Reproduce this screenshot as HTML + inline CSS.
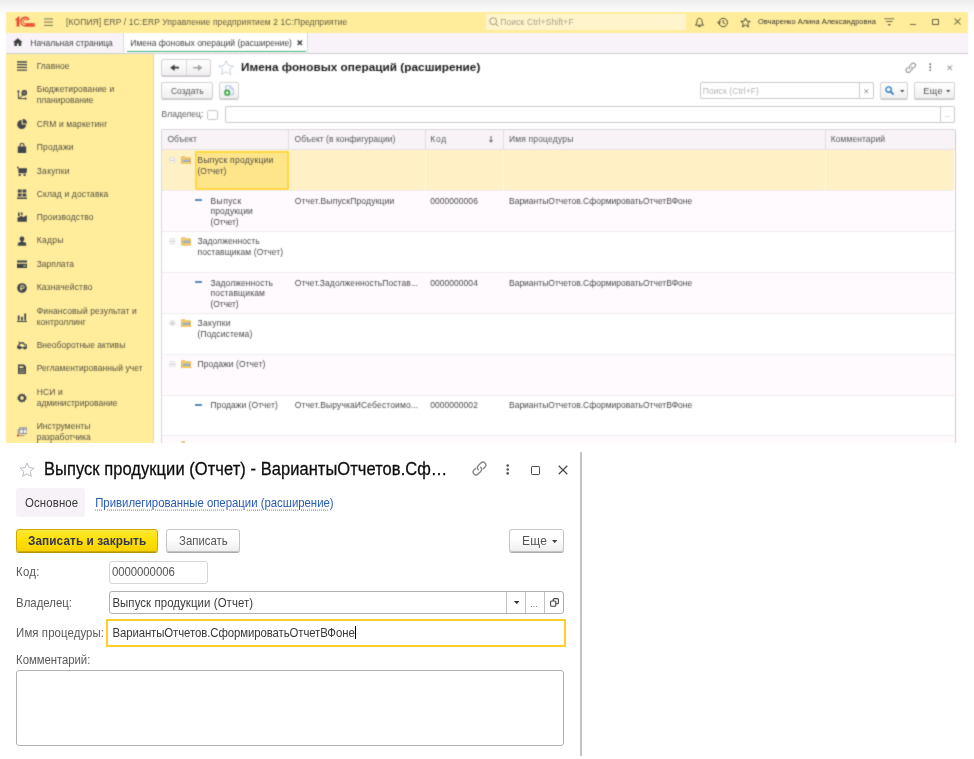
<!DOCTYPE html>
<html lang="ru">
<head>
<meta charset="utf-8">
<title>Имена фоновых операций (расширение)</title>
<style>
*{box-sizing:border-box;margin:0;padding:0}
html,body{width:974px;height:759px;overflow:hidden;background:#fff}
body{position:relative;font-family:"Liberation Sans",sans-serif;color:#333}
.a{position:absolute;white-space:nowrap}
#up{left:0;top:0;width:974px;height:442.3px;overflow:hidden;background:#fff;filter:url(#soft)}
#up .t{color:#4a4a4a}
#up .s{color:#555040}
.btn{border:1px solid #d3d0d3;border-radius:2px;background:linear-gradient(#fff,#f1eff1);box-shadow:0 .8px 0 #bab7ba}
.fld{border:1px solid #cac7ca;border-radius:2px;background:#fff}
#dlg{left:0;top:0;width:974px;height:759px}
#dlg .t{color:#3a3a3a}
.b2{border:1px solid #c4c4c4;border-radius:3px;background:linear-gradient(#fff 40%,#efefef);box-shadow:0 1px 0 #ababab}
.f2{border:1px solid #b0b0b0;border-radius:3px;background:#fff}
</style>
</head>
<body>
<svg width="0" height="0" style="position:absolute"><filter id="soft" x="0" y="0" width="100%" height="100%" color-interpolation-filters="sRGB"><feConvolveMatrix order="3" kernelMatrix="1 4 1 4 16 4 1 4 1" divisor="36" edgeMode="duplicate" preserveAlpha="true"/></filter></svg>
<div id="up" class="a">
<div class="a" style="left:0px;top:0px;width:974px;height:15px;background:linear-gradient(#ececec,#f5f5f5 45%,#fcfcfc 85%,#fff)"></div>
<div class="a" style="left:6.2px;top:12.3px;width:961.7px;height:20.5px;background:#ffed9c"></div>
<svg class="a" style="left:14.6px;top:16.2px;" width="20" height="11" viewBox="0 0 20 11"><path d="M.4 3.2L3.6 .5H4.4V10.5H1.6V3.8L.4 4.6Z" fill="#e8452f"/><path d="M19.6 10.4H10.4A4.9 4.9 0 1 1 14.6 3.6L13.3 4.2A3.5 3.5 0 1 0 10.4 9H19.6Z" fill="#e8452f"/><path d="M19.6 8.4H10.5A2.9 2.9 0 1 1 13 4.3L11.9 4.9A1.7 1.7 0 1 0 10.5 7.2H19.6Z" fill="#ee6142"/><rect x="11" y="7.4" width="8.6" height="3" fill="#eb5236"/></svg>
<svg class="a" style="left:43.8px;top:18px;" width="9.4" height="8.4" viewBox="0 0 9.4 8.4"><path d="M0 .9H9.4M0 4.1H9.4M0 7.4H9.4" stroke="#77714f" stroke-width="1"/></svg>
<div class="a t" style="left:66.1px;top:17.25px;font-size:8.5px;line-height:10.7px;letter-spacing:0.092px;color:#615c42">[КОПИЯ] ERP / 1С:ERP Управление предприятием 2 1С:Предприятие</div>
<div class="a" style="left:486px;top:13.6px;width:200px;height:16.6px;background:#fff4cc"></div>
<svg class="a" style="left:488.5px;top:17.3px;" width="10" height="10" viewBox="0 0 10 10"><circle cx="4.2" cy="4.2" r="3.4" fill="none" stroke="#97916f" stroke-width=".9"/><path d="M6.7 6.7L9.3 9.3" stroke="#97916f" stroke-width="1"/></svg>
<div class="a t" style="left:500.2px;top:16.95px;font-size:8.5px;line-height:10.7px;letter-spacing:0.129px;color:#a8a288">Поиск Ctrl+Shift+F</div>
<svg class="a" style="left:694px;top:17px;" width="11" height="11" viewBox="0 0 11 11"><path d="M5.5 1.2C3.6 1.2 3 3 3 4.6 3 6.6 1.6 7.6 1.6 8.2H9.4C9.4 7.6 8 6.6 8 4.6 8 3 7.4 1.2 5.5 1.2Z" fill="none" stroke="#3f3c2c" stroke-width=".9"/><path d="M4.4 9.4H6.6" stroke="#3f3c2c" stroke-width="1"/></svg>
<svg class="a" style="left:716.5px;top:17px;" width="11.5" height="11" viewBox="0 0 11.5 11"><circle cx="6.2" cy="5.5" r="4.2" fill="none" stroke="#3f3c2c" stroke-width=".95"/><path d="M6.2 3V5.7L8 6.8" fill="none" stroke="#3f3c2c" stroke-width=".9"/><path d="M0 4.6L2 6.8 3.6 4.3" fill="none" stroke="#3f3c2c" stroke-width=".9"/></svg>
<svg class="a" style="left:739.5px;top:16.5px;" width="11" height="11" viewBox="0 0 11 11"><path d="M5.5 1L6.9 4.1 10.2 4.4 7.7 6.6 8.5 9.9 5.5 8.1 2.5 9.9 3.3 6.6 .8 4.4 4.1 4.1Z" fill="none" stroke="#3f3c2c" stroke-width=".9" stroke-linejoin="round"/></svg>
<div class="a t" style="left:758.0px;top:16.85px;font-size:7.45px;line-height:10.7px;letter-spacing:0.040px;color:#35322a">Овчаренко Алина Александровна</div>
<svg class="a" style="left:884px;top:17.5px;" width="10.5" height="9" viewBox="0 0 10.5 9"><path d="M.3 .8H10.2M1.8 3.5H8.7" stroke="#64603f" stroke-width=".9"/><path d="M3.5 6L5.25 8 7 6Z" fill="#64603f"/></svg>
<div class="a" style="left:909.5px;top:24.4px;width:6.2px;height:1px;background:#726d4c"></div>
<div class="a" style="left:932.2px;top:18.6px;width:6.6px;height:6.6px;border:1.1px solid #67623f;border-radius:.8px"></div>
<svg class="a" style="left:954.2px;top:18.2px;" width="7" height="7" viewBox="0 0 7 7"><path d="M.5 .5L6.5 6.5M6.5 .5L.5 6.5" stroke="#5d583a" stroke-width="1.05"/></svg>
<div class="a" style="left:6.2px;top:32.8px;width:961.7px;height:20.9px;background:#f7f3f8;border-bottom:1.2px solid #d0cdd1"></div>
<svg class="a" style="left:13.4px;top:38px;" width="9.6" height="8.4" viewBox="0 0 9.6 8.4"><path d="M4.8 .2L0 4.3H1.4V8.2H3.9V5.6H5.7V8.2H8.2V4.3H9.6Z" fill="#3d3d3d"/></svg>
<div class="a t" style="left:30.3px;top:37.55px;font-size:8.5px;line-height:10.7px;letter-spacing:0.013px;color:#444">Начальная страница</div>
<div class="a" style="left:123.4px;top:33.2px;width:184.8px;height:19.6px;background:#fff;border-left:1px solid #dcd9dd;border-right:1px solid #dcd9dd"></div>
<div class="a" style="left:126.5px;top:51px;width:179px;height:1px;background:#3fae72"></div>
<div class="a t" style="left:130.3px;top:37.55px;font-size:8.5px;line-height:10.7px;color:#444">Имена фоновых операций (расширение)</div>
<svg class="a" style="left:297.3px;top:40.2px;" width="5.6" height="5.6" viewBox="0 0 5.6 5.6"><path d="M.6 .6L5 5M5 .6L.6 5" stroke="#3a3a3a" stroke-width="1.35"/></svg>
<div class="a" style="left:6.2px;top:53.6px;width:147.6px;height:389px;background:#ffed9c;border-right:1px solid #e8dba0"></div>
<svg class="a" style="left:17.2px;top:61.4px;" width="10" height="10" viewBox="0 0 10 10"><path d="M0 1H10M0 3.7H10M0 6.4H10M0 9.1H10" stroke="#41454c" stroke-width="1.3"/></svg>
<div class="a t s" style="left:36.7px;top:61.05px;font-size:8.5px;line-height:10.7px;letter-spacing:0.047px;">Главное</div>
<svg class="a" style="left:17.2px;top:89.75px;" width="10" height="10" viewBox="0 0 10 10"><path d="M1.4 1.6V8.6H8.6" fill="none" stroke="#41454c" stroke-width="1"/><circle cx="1.4" cy="1.4" r="1.1" fill="#41454c"/><path d="M8 7.2L10 8.6 8 10Z" fill="#41454c"/><path d="M1.6 8.4L6.6 4.6" stroke="#41454c" stroke-width=".9"/><circle cx="7.3" cy="2.8" r="2.9" fill="#41454c"/><circle cx="7.3" cy="2.8" r="1.5" fill="#7d7a60"/></svg>
<div class="a t s" style="left:36.7px;top:84.05px;font-size:8.5px;line-height:10.7px;letter-spacing:0.145px;">Бюджетирование и</div>
<div class="a t s" style="left:36.7px;top:94.75px;font-size:8.5px;line-height:10.7px;letter-spacing:0.032px;">планирование</div>
<svg class="a" style="left:17.2px;top:118.9px;" width="10" height="10" viewBox="0 0 10 10"><path d="M4.6 1A4.5 4.5 0 1 0 9.2 5.6H4.6Z" fill="#41454c"/><path d="M5.7 0A4.4 4.4 0 0 1 10 4.4H5.7Z" fill="#41454c"/></svg>
<div class="a t s" style="left:36.7px;top:118.55px;font-size:8.5px;line-height:10.7px;letter-spacing:0.124px;">CRM и маркетинг</div>
<svg class="a" style="left:17.2px;top:142.7px;" width="10" height="10" viewBox="0 0 10 10"><path d="M.8 3.4H9.2V10H.8Z" fill="#41454c"/><path d="M3 3.6V2.4A2 2 0 0 1 7 2.4V3.6" fill="none" stroke="#41454c" stroke-width="1.1"/></svg>
<div class="a t s" style="left:36.7px;top:142.35px;font-size:8.5px;line-height:10.7px;letter-spacing:0.227px;">Продажи</div>
<svg class="a" style="left:17.2px;top:165.9px;" width="10" height="10" viewBox="0 0 10 10"><path d="M0 1L1.4 1.9" stroke="#41454c" stroke-width="1.2" stroke-linecap="round"/><path d="M1.2 2.2H10.4L9.3 7.2H1.6Z" fill="#41454c"/><circle cx="2.7" cy="8.9" r="1.15" fill="#41454c"/><circle cx="7.6" cy="8.9" r="1.15" fill="#41454c"/></svg>
<div class="a t s" style="left:36.7px;top:165.55px;font-size:8.5px;line-height:10.7px;letter-spacing:0.294px;">Закупки</div>
<svg class="a" style="left:17.2px;top:189.1px;" width="10" height="10" viewBox="0 0 10 10"><path d="M.8 .4H4.6V3.6H.8ZM5.5 .4H9.3V3.6H5.5ZM.8 4.4H4.6V7.6H.8ZM5.5 4.4H9.3V7.6H5.5ZM0 8.4H10V10H0Z" fill="#41454c"/></svg>
<div class="a t s" style="left:36.7px;top:188.75px;font-size:8.5px;line-height:10.7px;letter-spacing:0.132px;">Склад и доставка</div>
<svg class="a" style="left:17.2px;top:212.4px;" width="10" height="10" viewBox="0 0 10 10"><path d="M.5 9.8V5.7L5.4 3.4V5.6L9.8 3.2V9.8Z" fill="#41454c"/><path d="M1 .5H2.6V4.2H1ZM3.8 .5H5.5V3H3.8Z" fill="#41454c"/></svg>
<div class="a t s" style="left:36.7px;top:212.05px;font-size:8.5px;line-height:10.7px;letter-spacing:0.131px;">Производство</div>
<svg class="a" style="left:17.2px;top:235.7px;" width="10" height="10" viewBox="0 0 10 10"><circle cx="5" cy="2.9" r="2.4" fill="#41454c"/><path d="M4 4.6H6V6.6H4Z" fill="#41454c"/><path d="M.8 9.8V8C.8 6.8 2 6.3 3.4 6.1H6.6C8 6.3 9.2 6.8 9.2 8V9.8Z" fill="#41454c"/></svg>
<div class="a t s" style="left:36.7px;top:235.35px;font-size:8.5px;line-height:10.7px;letter-spacing:0.295px;">Кадры</div>
<svg class="a" style="left:17.2px;top:259.2px;" width="10" height="10" viewBox="0 0 10 10"><path d="M0 1.6H10V3.6H0ZM0 4.8H10V9H0Z" fill="#41454c"/><path d="M6.4 7H9" stroke="#ffed9c" stroke-width=".9"/></svg>
<div class="a t s" style="left:36.7px;top:258.85px;font-size:8.5px;line-height:10.7px;">Зарплата</div>
<svg class="a" style="left:17.2px;top:282.6px;" width="10" height="10" viewBox="0 0 10 10"><circle cx="5" cy="5" r="4.8" fill="#41454c"/><path d="M4 7.8V2.6H5.6A1.5 1.5 0 0 1 5.6 5.6H3.2" fill="none" stroke="#ffed9c" stroke-width="1"/></svg>
<div class="a t s" style="left:36.7px;top:282.25px;font-size:8.5px;line-height:10.7px;letter-spacing:0.168px;">Казначейство</div>
<svg class="a" style="left:17.2px;top:311.85px;" width="10" height="10" viewBox="0 0 10 10"><path d="M.8 3.4H2.6V8.6H.8ZM4.1 4.8H5.9V8.6H4.1ZM7.3 1.6H9.1V8.6H7.3ZM0 9H10V10H0Z" fill="#41454c"/></svg>
<div class="a t s" style="left:36.7px;top:306.15px;font-size:8.5px;line-height:10.7px;letter-spacing:0.130px;">Финансовый результат и</div>
<div class="a t s" style="left:36.7px;top:316.85px;font-size:8.5px;line-height:10.7px;letter-spacing:0.031px;">контроллинг</div>
<svg class="a" style="left:17.2px;top:340.4px;" width="10" height="10" viewBox="0 0 10 10"><path d="M.6 6.8L3.2 3H6.4L7.4 4.6 10 5.2V7.6H.6Z" fill="none" stroke="#41454c" stroke-width="1.3"/><path d="M3 3L1.4 1.8" stroke="#41454c" stroke-width="1"/><circle cx="2.6" cy="7.6" r="1.8" fill="#41454c"/><circle cx="7.9" cy="7.8" r="1.6" fill="#41454c"/></svg>
<div class="a t s" style="left:36.7px;top:340.05px;font-size:8.5px;line-height:10.7px;letter-spacing:0.016px;">Внеоборотные активы</div>
<svg class="a" style="left:17.2px;top:363.8px;" width="10" height="10" viewBox="0 0 10 10"><path d="M1 .4H7L9 2.4V10H1Z" fill="#41454c"/><path d="M2.4 2.2H6.4V4H2.4Z" fill="#ffed9c"/><path d="M2.4 5.6H7.6M2.4 7.2H7.6M2.4 8.7H7.6" stroke="#ffed9c" stroke-width=".7" stroke-dasharray="1.2 .8"/></svg>
<div class="a t s" style="left:36.7px;top:363.45px;font-size:8.5px;line-height:10.7px;letter-spacing:0.050px;">Регламентированный учет</div>
<svg class="a" style="left:17.2px;top:392.75px;" width="10" height="10" viewBox="0 0 10 10"><path d="M5 .2L6 1.6 7.8 1.2 8.1 3 9.8 3.8 8.9 5 9.8 6.2 8.1 7 7.8 8.8 6 8.4 5 9.8 4 8.4 2.2 8.8 1.9 7 .2 6.2 1.1 5 .2 3.8 1.9 3 2.2 1.2 4 1.6Z" fill="#41454c"/><circle cx="5" cy="5" r="1.9" fill="#ffed9c"/></svg>
<div class="a t s" style="left:36.7px;top:387.05px;font-size:8.5px;line-height:10.7px;letter-spacing:0.166px;">НСИ и</div>
<div class="a t s" style="left:36.7px;top:397.75px;font-size:8.5px;line-height:10.7px;letter-spacing:0.040px;">администрирование</div>
<svg class="a" style="left:17.2px;top:426.85px;" width="10" height="10" viewBox="0 0 10 10"><path d="M2.6 .8H10V6.6H2.6Z" fill="#f4f4f6" stroke="#6e6e78" stroke-width=".8"/><path d="M6.3 .8V6.6M2.6 2.4H10" stroke="#6e6e78" stroke-width=".7"/><path d="M1.2 2V8.6H7.4" fill="none" stroke="#7a7a84" stroke-width=".8"/><rect x="0" y="7.6" width="1.8" height="1.8" fill="#e03a2a"/></svg>
<div class="a t s" style="left:36.7px;top:421.15px;font-size:8.5px;line-height:10.7px;letter-spacing:0.065px;">Инструменты</div>
<div class="a t s" style="left:36.7px;top:431.85px;font-size:8.5px;line-height:10.7px;letter-spacing:0.022px;">разработчика</div>
<div class="a btn" style="left:161px;top:59.4px;width:50px;height:16.2px;"></div>
<div class="a" style="left:186.2px;top:60.2px;width:1px;height:14.6px;background:#dcd9dc"></div>
<svg class="a" style="left:169.6px;top:63.9px;" width="9.6" height="7.4" viewBox="0 0 9.6 7.4"><path d="M.2 3.7L4.6 .5V2.8H9.4V4.6H4.6V6.9Z" fill="#3c3c3c"/></svg>
<svg class="a" style="left:193.4px;top:63.9px;" width="9.6" height="7.4" viewBox="0 0 9.6 7.4"><path d="M9.4 3.7L5 .5V2.9H.2V4.5H5V6.9Z" fill="#a2a2a2"/></svg>
<svg class="a" style="left:218.2px;top:59.8px;" width="16.4" height="15.2" viewBox="0 0 16.4 15.2"><path d="M8.2 .8L10.4 5.5 15.6 6 11.7 9.5 12.8 14.5 8.2 11.9 3.6 14.5 4.7 9.5 .8 6 6 5.5Z" fill="#fff" stroke="#c6d0dc" stroke-width=".95" stroke-linejoin="round"/></svg>
<div class="a t" style="left:241.0px;top:60.3px;font-size:11.75px;line-height:14px;font-weight:700;letter-spacing:0.030px;color:#1a1a1a">Имена фоновых операций (расширение)</div>
<svg class="a" style="left:904.5px;top:61.5px;" width="11.5" height="11.5" viewBox="0 0 11.5 11.5"><g fill="none" stroke="#8a8a8a" stroke-width="1.05" stroke-linecap="round"><path d="M4.9 6.6a2.2 2.2 0 0 1 0-3.1l1.9-1.9a2.2 2.2 0 0 1 3.1 3.1l-1 1"/><path d="M6.6 4.9a2.2 2.2 0 0 1 0 3.1l-1.9 1.9a2.2 2.2 0 0 1-3.1-3.1l1-1"/></g></svg>
<svg class="a" style="left:928.6px;top:62.8px;" width="2.6" height="8.6" viewBox="0 0 2.6 8.6"><circle cx="1.3" cy="1.2" r="1" fill="#666"/><circle cx="1.3" cy="4.3" r="1" fill="#666"/><circle cx="1.3" cy="7.4" r="1" fill="#666"/></svg>
<svg class="a" style="left:947.4px;top:64.6px;" width="5.4" height="5.4" viewBox="0 0 5.4 5.4"><path d="M.5 .5L4.9 4.9M4.9 .5L.5 4.9" stroke="#666" stroke-width=".9"/></svg>
<div class="a btn" style="left:161px;top:82.4px;width:52px;height:16.6px;"></div>
<div class="a t" style="left:170.9px;top:85.85px;font-size:8.5px;line-height:10.7px;letter-spacing:0.075px;color:#555">Создать</div>
<div class="a btn" style="left:219.3px;top:82.4px;width:20px;height:16.6px;"></div>
<svg class="a" style="left:224.2px;top:85.4px;" width="10.6" height="11" viewBox="0 0 10.6 11"><path d="M1.6 .8H6.4L9.2 3.6V9.8H1.6Z" fill="#f3f7fc" stroke="#a5badb" stroke-width=".9"/><path d="M6.2 1V3.8H9" fill="none" stroke="#a5badb" stroke-width=".8"/><circle cx="3.2" cy="7.7" r="3.1" fill="#35a544"/><path d="M1.5 7.7H4.9M3.2 6V9.4" stroke="#fff" stroke-width="1.1"/></svg>
<div class="a fld" style="left:700.2px;top:82.4px;width:173.4px;height:16.8px;"></div>
<div class="a" style="left:859.3px;top:83.2px;width:1px;height:15.2px;background:#ccc9cc"></div>
<div class="a t" style="left:702.7px;top:85.85px;font-size:8.5px;line-height:10.7px;letter-spacing:0.101px;color:#b4b4b4">Поиск (Ctrl+F)</div>
<svg class="a" style="left:864px;top:88.6px;" width="4.6" height="4.6" viewBox="0 0 4.6 4.6"><path d="M.4 .4L4.2 4.2M4.2 .4L.4 4.2" stroke="#7a7a7a" stroke-width=".9"/></svg>
<div class="a btn" style="left:880px;top:82.4px;width:27.6px;height:16.6px;"></div>
<svg class="a" style="left:885.4px;top:86px;" width="9.4" height="9.4" viewBox="0 0 9.4 9.4"><circle cx="3.6" cy="3.6" r="2.7" fill="none" stroke="#2f7fc0" stroke-width="1.4"/><path d="M5.7 5.7L8.6 8.6" stroke="#2f7fc0" stroke-width="1.7"/></svg>
<svg class="a" style="left:899.6px;top:90.2px;" width="4.4" height="2.6" viewBox="0 0 4.4 2.6"><path d="M0 0H4.4L2.2 2.6Z" fill="#555"/></svg>
<div class="a btn" style="left:914px;top:82.4px;width:41px;height:16.6px;"></div>
<div class="a t" style="left:923.2px;top:85.85px;font-size:9px;line-height:10.7px;letter-spacing:0.499px;color:#555">Еще</div>
<svg class="a" style="left:946.4px;top:90.2px;" width="4.4" height="2.6" viewBox="0 0 4.4 2.6"><path d="M0 0H4.4L2.2 2.6Z" fill="#555"/></svg>
<div class="a t" style="left:161.5px;top:109.35px;font-size:8.5px;line-height:10.7px;letter-spacing:0.022px;color:#5a5a5a">Владелец:</div>
<div class="a" style="left:207.4px;top:109.6px;width:10.4px;height:10px;border:1px solid #c8c5c8;border-radius:1.5px;background:#fff"></div>
<div class="a fld" style="left:225.2px;top:106.2px;width:730.3px;height:16.4px;"></div>
<div class="a" style="left:940.4px;top:106.8px;width:1px;height:15.2px;background:#ccc9cc"></div>
<div class="a t" style="left:944.2px;top:110.25px;font-size:7px;line-height:10.7px;color:#999">...</div>
<div class="a" style="left:161px;top:128.8px;width:794.6px;height:314px;border:1.4px solid #dad7da;border-right:1.6px solid #cdcbce;border-bottom:0;border-radius:2px 2px 0 0;background:#fff"></div>
<div class="a" style="left:162px;top:129.8px;width:792.6px;height:20.5px;background:#f7f3f7;border-bottom:1px solid #e6e3e7"></div>
<div class="a" style="left:288.3px;top:129.8px;width:1px;height:20.4px;background:#e0dde1"></div>
<div class="a" style="left:425.2px;top:129.8px;width:1px;height:20.4px;background:#e0dde1"></div>
<div class="a" style="left:502.9px;top:129.8px;width:1px;height:20.4px;background:#e0dde1"></div>
<div class="a" style="left:825.0px;top:129.8px;width:1px;height:20.4px;background:#e0dde1"></div>
<div class="a t" style="left:167.4px;top:134.35px;font-size:8.5px;line-height:10.7px;letter-spacing:0.122px;color:#5a5a5a">Объект</div>
<div class="a t" style="left:294.5px;top:134.35px;font-size:8.5px;line-height:10.7px;letter-spacing:0.044px;color:#5a5a5a">Объект (в конфигурации)</div>
<div class="a t" style="left:430.3px;top:134.35px;font-size:8.5px;line-height:10.7px;letter-spacing:0.706px;color:#5a5a5a">Код</div>
<svg class="a" style="left:489.4px;top:136.4px;" width="4" height="6.6" viewBox="0 0 4 6.6"><path d="M2 0V5.6M.3 4L2 6.2 3.7 4" fill="none" stroke="#555" stroke-width=".9"/></svg>
<div class="a t" style="left:508.9px;top:134.35px;font-size:8.5px;line-height:10.7px;letter-spacing:0.176px;color:#5a5a5a">Имя процедуры</div>
<div class="a t" style="left:830.7px;top:134.35px;font-size:8.5px;line-height:10.7px;letter-spacing:0.082px;color:#5a5a5a">Комментарий</div>
<div class="a" style="left:162px;top:150.3px;width:792.0px;height:40.1px;background:#fff1c5"></div>
<div class="a" style="left:162px;top:190.4px;width:792.0px;height:41.2px;background:#fefafe"></div>
<div class="a" style="left:162px;top:231.6px;width:792.0px;height:41.0px;background:#fff"></div>
<div class="a" style="left:162px;top:272.6px;width:792.0px;height:40.7px;background:#fefafe"></div>
<div class="a" style="left:162px;top:313.3px;width:792.0px;height:40.9px;background:#fff"></div>
<div class="a" style="left:162px;top:354.2px;width:792.0px;height:40.8px;background:#fefafe"></div>
<div class="a" style="left:162px;top:395.0px;width:792.0px;height:40.5px;background:#fff"></div>
<div class="a" style="left:162px;top:435.5px;width:792.0px;height:40.9px;background:#fefafe"></div>
<div class="a" style="left:162px;top:189.9px;width:792.0px;height:1px;background:#efecef"></div>
<div class="a" style="left:162px;top:231.1px;width:792.0px;height:1px;background:#efecef"></div>
<div class="a" style="left:162px;top:272.1px;width:792.0px;height:1px;background:#efecef"></div>
<div class="a" style="left:162px;top:312.8px;width:792.0px;height:1px;background:#efecef"></div>
<div class="a" style="left:162px;top:353.7px;width:792.0px;height:1px;background:#efecef"></div>
<div class="a" style="left:162px;top:394.5px;width:792.0px;height:1px;background:#efecef"></div>
<div class="a" style="left:162px;top:435.0px;width:792.0px;height:1px;background:#efecef"></div>
<div class="a" style="left:162px;top:475.9px;width:792.0px;height:1px;background:#efecef"></div>
<div class="a" style="left:288.3px;top:150.3px;width:1px;height:39.6px;background:#fff9e6"></div>
<div class="a" style="left:425.2px;top:150.3px;width:1px;height:39.6px;background:#fff9e6"></div>
<div class="a" style="left:502.9px;top:150.3px;width:1px;height:39.6px;background:#fff9e6"></div>
<div class="a" style="left:825.0px;top:150.3px;width:1px;height:39.6px;background:#fff9e6"></div>
<div class="a" style="left:195.2px;top:151px;width:93.4px;height:38.6px;background:#fee589;border:2px solid #ffd744"></div>
<svg class="a" style="left:169.1px;top:156.9px;" width="6.6" height="6.6" viewBox="0 0 6.6 6.6"><circle cx="3.3" cy="3.3" r="2.8" fill="#fff" stroke="#c8c8c8" stroke-width=".7"/><path d="M1.7 3.3H4.9" stroke="#aaa" stroke-width=".8"/></svg>
<svg class="a" style="left:180.9px;top:155.9px;" width="10.4" height="8.6" viewBox="0 0 10.4 8.6"><path d="M.4 1.4C.4 1 .7 .7 1.1 .7H3.6L4.6 1.8H9.3C9.7 1.8 10 2.1 10 2.5V7.5C10 7.9 9.7 8.2 9.3 8.2H1.1C.7 8.2 .4 7.9 .4 7.5Z" fill="#f7cf6c" stroke="#dda63a" stroke-width=".7"/><rect x="1.5" y="3.6" width="7.6" height="2.4" fill="#8a9db4"/><path d="M1.5 4.8H9.1" stroke="#e3e9f0" stroke-width=".7" stroke-dasharray="1.7 .8"/></svg>
<div class="a t" style="left:197.5px;top:155.05px;font-size:8.5px;line-height:10.7px;letter-spacing:0.249px;">Выпуск продукции</div>
<div class="a t" style="left:197.5px;top:165.75px;font-size:8.5px;line-height:10.7px;letter-spacing:-0.012px;">(Отчет)</div>
<div class="a" style="left:195.2px;top:199.0px;width:6.8px;height:2.2px;background:#5588b6;border-radius:.6px"></div>
<div class="a t" style="left:210.5px;top:195.55px;font-size:8.5px;line-height:10.7px;letter-spacing:0.450px;">Выпуск</div>
<div class="a t" style="left:210.5px;top:206.25px;font-size:8.5px;line-height:10.7px;letter-spacing:0.137px;">продукции</div>
<div class="a t" style="left:210.5px;top:216.95px;font-size:8.5px;line-height:10.7px;letter-spacing:-0.129px;">(Отчет)</div>
<div class="a t" style="left:294.7px;top:195.55px;font-size:8.5px;line-height:10.7px;letter-spacing:0.189px;">Отчет.ВыпускПродукции</div>
<div class="a t" style="left:430.3px;top:195.55px;font-size:8.5px;line-height:10.7px;letter-spacing:0.032px;">0000000006</div>
<div class="a t" style="left:509.0px;top:195.55px;font-size:8.5px;line-height:10.7px;">ВариантыОтчетов.СформироватьОтчетВФоне</div>
<svg class="a" style="left:169.1px;top:238.2px;" width="6.6" height="6.6" viewBox="0 0 6.6 6.6"><circle cx="3.3" cy="3.3" r="2.8" fill="#fff" stroke="#c8c8c8" stroke-width=".7"/><path d="M1.7 3.3H4.9" stroke="#aaa" stroke-width=".8"/></svg>
<svg class="a" style="left:180.9px;top:237.2px;" width="10.4" height="8.6" viewBox="0 0 10.4 8.6"><path d="M.4 1.4C.4 1 .7 .7 1.1 .7H3.6L4.6 1.8H9.3C9.7 1.8 10 2.1 10 2.5V7.5C10 7.9 9.7 8.2 9.3 8.2H1.1C.7 8.2 .4 7.9 .4 7.5Z" fill="#f7cf6c" stroke="#dda63a" stroke-width=".7"/><rect x="1.5" y="3.6" width="7.6" height="2.4" fill="#8a9db4"/><path d="M1.5 4.8H9.1" stroke="#e3e9f0" stroke-width=".7" stroke-dasharray="1.7 .8"/></svg>
<div class="a t" style="left:197.5px;top:236.35px;font-size:8.5px;line-height:10.7px;letter-spacing:0.062px;">Задолженность</div>
<div class="a t" style="left:197.5px;top:247.05px;font-size:8.5px;line-height:10.7px;letter-spacing:0.085px;">поставщикам (Отчет)</div>
<div class="a" style="left:195.2px;top:281.2px;width:6.8px;height:2.2px;background:#5588b6;border-radius:.6px"></div>
<div class="a t" style="left:210.5px;top:277.75px;font-size:8.5px;line-height:10.7px;letter-spacing:0.079px;">Задолженность</div>
<div class="a t" style="left:210.5px;top:288.45px;font-size:8.5px;line-height:10.7px;letter-spacing:0.162px;">поставщикам</div>
<div class="a t" style="left:210.5px;top:299.15px;font-size:8.5px;line-height:10.7px;letter-spacing:-0.129px;">(Отчет)</div>
<div class="a t" style="left:294.7px;top:277.75px;font-size:8.5px;line-height:10.7px;letter-spacing:0.079px;">Отчет.ЗадолженностьПостав...</div>
<div class="a t" style="left:430.3px;top:277.75px;font-size:8.5px;line-height:10.7px;letter-spacing:0.032px;">0000000004</div>
<div class="a t" style="left:509.0px;top:277.75px;font-size:8.5px;line-height:10.7px;">ВариантыОтчетов.СформироватьОтчетВФоне</div>
<svg class="a" style="left:169.1px;top:319.9px;" width="6.6" height="6.6" viewBox="0 0 6.6 6.6"><circle cx="3.3" cy="3.3" r="2.8" fill="#fff" stroke="#c8c8c8" stroke-width=".7"/><path d="M1.7 3.3H4.9" stroke="#aaa" stroke-width=".8"/><path d="M3.3 1.7V4.9" stroke="#aaa" stroke-width=".8"/></svg>
<svg class="a" style="left:180.9px;top:318.9px;" width="10.4" height="8.6" viewBox="0 0 10.4 8.6"><path d="M.4 1.4C.4 1 .7 .7 1.1 .7H3.6L4.6 1.8H9.3C9.7 1.8 10 2.1 10 2.5V7.5C10 7.9 9.7 8.2 9.3 8.2H1.1C.7 8.2 .4 7.9 .4 7.5Z" fill="#f7cf6c" stroke="#dda63a" stroke-width=".7"/><rect x="1.5" y="3.6" width="7.6" height="2.4" fill="#8a9db4"/><path d="M1.5 4.8H9.1" stroke="#e3e9f0" stroke-width=".7" stroke-dasharray="1.7 .8"/></svg>
<div class="a t" style="left:197.5px;top:318.05px;font-size:8.5px;line-height:10.7px;letter-spacing:0.327px;">Закупки</div>
<div class="a t" style="left:197.5px;top:328.75px;font-size:8.5px;line-height:10.7px;letter-spacing:0.104px;">(Подсистема)</div>
<svg class="a" style="left:169.1px;top:360.8px;" width="6.6" height="6.6" viewBox="0 0 6.6 6.6"><circle cx="3.3" cy="3.3" r="2.8" fill="#fff" stroke="#c8c8c8" stroke-width=".7"/><path d="M1.7 3.3H4.9" stroke="#aaa" stroke-width=".8"/></svg>
<svg class="a" style="left:180.9px;top:359.8px;" width="10.4" height="8.6" viewBox="0 0 10.4 8.6"><path d="M.4 1.4C.4 1 .7 .7 1.1 .7H3.6L4.6 1.8H9.3C9.7 1.8 10 2.1 10 2.5V7.5C10 7.9 9.7 8.2 9.3 8.2H1.1C.7 8.2 .4 7.9 .4 7.5Z" fill="#f7cf6c" stroke="#dda63a" stroke-width=".7"/><rect x="1.5" y="3.6" width="7.6" height="2.4" fill="#8a9db4"/><path d="M1.5 4.8H9.1" stroke="#e3e9f0" stroke-width=".7" stroke-dasharray="1.7 .8"/></svg>
<div class="a t" style="left:197.5px;top:358.95px;font-size:8.5px;line-height:10.7px;letter-spacing:0.083px;">Продажи (Отчет)</div>
<div class="a" style="left:195.2px;top:403.6px;width:6.8px;height:2.2px;background:#5588b6;border-radius:.6px"></div>
<div class="a t" style="left:210.5px;top:400.15px;font-size:8.5px;line-height:10.7px;letter-spacing:0.033px;">Продажи (Отчет)</div>
<div class="a t" style="left:294.7px;top:400.15px;font-size:8.5px;line-height:10.7px;letter-spacing:0.134px;">Отчет.ВыручкаИСебестоимо...</div>
<div class="a t" style="left:430.3px;top:400.15px;font-size:8.5px;line-height:10.7px;letter-spacing:0.032px;">0000000002</div>
<div class="a t" style="left:509.0px;top:400.15px;font-size:8.5px;line-height:10.7px;">ВариантыОтчетов.СформироватьОтчетВФоне</div>
<svg class="a" style="left:169.1px;top:442.1px;" width="6.6" height="6.6" viewBox="0 0 6.6 6.6"><circle cx="3.3" cy="3.3" r="2.8" fill="#fff" stroke="#c8c8c8" stroke-width=".7"/><path d="M1.7 3.3H4.9" stroke="#aaa" stroke-width=".8"/><path d="M3.3 1.7V4.9" stroke="#aaa" stroke-width=".8"/></svg>
<svg class="a" style="left:180.9px;top:441.1px;" width="10.4" height="8.6" viewBox="0 0 10.4 8.6"><path d="M.4 1.4C.4 1 .7 .7 1.1 .7H3.6L4.6 1.8H9.3C9.7 1.8 10 2.1 10 2.5V7.5C10 7.9 9.7 8.2 9.3 8.2H1.1C.7 8.2 .4 7.9 .4 7.5Z" fill="#f7cf6c" stroke="#dda63a" stroke-width=".7"/><rect x="1.5" y="3.6" width="7.6" height="2.4" fill="#8a9db4"/><path d="M1.5 4.8H9.1" stroke="#e3e9f0" stroke-width=".7" stroke-dasharray="1.7 .8"/></svg>
<div class="a t" style="left:197.5px;top:440.25px;font-size:8.5px;line-height:10.7px;letter-spacing:0.077px;">Продажи</div>
</div>
<div id="dlg" class="a">
<div class="a" style="left:580px;top:451.5px;width:2px;height:304.5px;background:#c3c3c3"></div>
<svg class="a" style="left:18.8px;top:462px;" width="16" height="15.4" viewBox="0 0 16 15.4"><path d="M8 1L10 5.6 15 6.1 11.2 9.5 12.3 14.4 8 11.8 3.7 14.4 4.8 9.5 1 6.1 6 5.6Z" fill="#fff" stroke="#b9bcc2" stroke-width="1" stroke-linejoin="round"/></svg>
<div class="a t" style="left:44.0px;top:459.2px;font-size:16.5px;line-height:20px;letter-spacing:0.052px;transform:scaleY(1.06);color:#0c0c0c;-webkit-text-stroke:.25px #0c0c0c">Выпуск продукции (Отчет) - ВариантыОтчетов.Сф…</div>
<svg class="a" style="left:472px;top:461.4px;" width="15" height="15" viewBox="0 0 15 15"><g fill="none" stroke="#858585" stroke-width="1.35" stroke-linecap="round"><path d="M6.3 8.7a2.9 2.9 0 0 1 0-4.1l2.6-2.6a2.9 2.9 0 0 1 4.1 4.1l-1.4 1.4"/><path d="M8.7 6.3a2.9 2.9 0 0 1 0 4.1l-2.6 2.6a2.9 2.9 0 0 1-4.1-4.1l1.4-1.4"/></g></svg>
<svg class="a" style="left:506.3px;top:464.4px;" width="3.4" height="11" viewBox="0 0 3.4 11"><circle cx="1.7" cy="1.6" r="1.3" fill="#555"/><circle cx="1.7" cy="5.5" r="1.3" fill="#555"/><circle cx="1.7" cy="9.4" r="1.3" fill="#555"/></svg>
<div class="a" style="left:531px;top:465.6px;width:9.4px;height:9.4px;border:1.4px solid #4a4a4a;border-radius:1.2px"></div>
<svg class="a" style="left:557.8px;top:465px;" width="10" height="10" viewBox="0 0 10 10"><path d="M.7 .7L9.3 9.3M9.3 .7L.7 9.3" stroke="#4a4a4a" stroke-width="1.25"/></svg>
<div class="a" style="left:16px;top:488px;width:69px;height:29px;background:#f6f2f7;border-radius:3px"></div>
<div class="a t" style="left:25.0px;top:495.6px;font-size:11.4px;line-height:14px;letter-spacing:0.132px;transform:scaleY(1.09);">Основное</div>
<div class="a t" style="left:95.2px;top:495.6px;font-size:11.4px;line-height:14px;letter-spacing:-0.016px;transform:scaleY(1.09);color:#2a5bb5;text-decoration:underline dotted #7d9cd6;text-decoration-thickness:1px;text-underline-offset:2px">Привилегированные операции (расширение)</div>
<div class="a" style="left:16px;top:529px;width:142px;height:23px;border:1px solid #cfa900;border-radius:3px;background:linear-gradient(#ffe838,#ffe000 50%,#f6d200);box-shadow:0 1px 0 #b39300"></div>
<div class="a t" style="left:28.0px;top:533.8px;font-size:11.8px;line-height:14px;font-weight:700;letter-spacing:0.073px;transform:scaleY(1.09);color:#33364d">Записать и закрыть</div>
<div class="a b2" style="left:166px;top:529px;width:74px;height:23px;"></div>
<div class="a t" style="left:179.1px;top:533.8px;font-size:11.4px;line-height:14px;transform:scaleY(1.09);color:#555">Записать</div>
<div class="a b2" style="left:509px;top:529px;width:55px;height:23px;"></div>
<div class="a t" style="left:521.9px;top:533.8px;font-size:12px;line-height:14px;letter-spacing:0.329px;transform:scaleY(1.09);color:#555">Еще</div>
<svg class="a" style="left:551.6px;top:540px;" width="5.4" height="3.2" viewBox="0 0 5.4 3.2"><path d="M0 0H5.4L2.7 3.2Z" fill="#444"/></svg>
<div class="a t" style="left:16.1px;top:565.0px;font-size:11.4px;line-height:14px;letter-spacing:0.232px;transform:scaleY(1.09);color:#5a5a5a">Код:</div>
<div class="a f2" style="left:109px;top:561px;width:99px;height:23px;border-color:#d6d6d6"></div>
<div class="a t" style="left:111.9px;top:565.2px;font-size:11.4px;line-height:14px;letter-spacing:-0.048px;transform:scaleY(1.09);color:#555">0000000006</div>
<div class="a t" style="left:16.1px;top:596.0px;font-size:11.4px;line-height:14px;transform:scaleY(1.09);color:#5a5a5a">Владелец:</div>
<div class="a f2" style="left:109px;top:591px;width:455px;height:23px;"></div>
<div class="a" style="left:506px;top:592px;width:1px;height:21px;background:#c2c2c2"></div>
<div class="a" style="left:525px;top:592px;width:1px;height:21px;background:#c2c2c2"></div>
<div class="a" style="left:544px;top:592px;width:1px;height:21px;background:#c2c2c2"></div>
<svg class="a" style="left:513.6px;top:601.2px;" width="5.4" height="3.2" viewBox="0 0 5.4 3.2"><path d="M0 0H5.4L2.7 3.2Z" fill="#333"/></svg>
<div class="a t" style="left:530.3px;top:599.25px;font-size:9px;line-height:10.7px;transform:scaleY(1.001);color:#777">...</div>
<svg class="a" style="left:550px;top:598.4px;" width="9" height="9" viewBox="0 0 9 9"><rect x="3.2" y=".6" width="5.2" height="5.2" rx="1" fill="#fff" stroke="#444" stroke-width="1.1"/><rect x=".6" y="3" width="5.2" height="5.2" rx="1" fill="#fff" stroke="#444" stroke-width="1.1"/></svg>
<div class="a t" style="left:112.4px;top:596.0px;font-size:11.4px;line-height:14px;letter-spacing:0.098px;transform:scaleY(1.09);">Выпуск продукции (Отчет)</div>
<div class="a t" style="left:16.1px;top:626.2px;font-size:11.4px;line-height:14px;letter-spacing:0.104px;transform:scaleY(1.09);color:#5a5a5a">Имя процедуры:</div>
<div class="a" style="left:106px;top:619px;width:460px;height:28px;border:2px solid #fccf2e;background:#fff"></div>
<div class="a t" style="left:112.4px;top:626.2px;font-size:11.4px;line-height:14px;letter-spacing:-0.088px;transform:scaleY(1.09);">ВариантыОтчетов.СформироватьОтчетВФоне</div>
<div class="a" style="left:355px;top:626px;width:1px;height:13px;background:#000"></div>
<div class="a t" style="left:16.1px;top:653.2px;font-size:11.4px;line-height:14px;letter-spacing:-0.063px;transform:scaleY(1.09);color:#5a5a5a">Комментарий:</div>
<div class="a f2" style="left:16px;top:670px;width:548px;height:76px;"></div>
</div>
</body>
</html>
